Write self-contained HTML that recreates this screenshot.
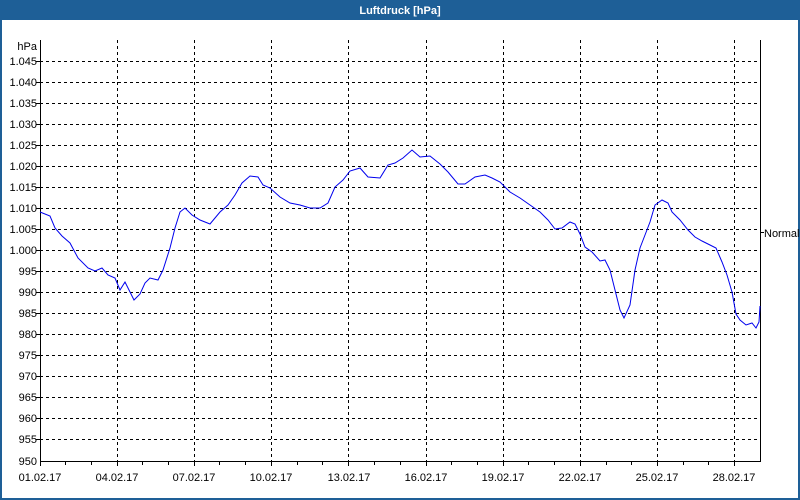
<!DOCTYPE html>
<html><head><meta charset="utf-8"><style>
html,body{margin:0;padding:0;width:800px;height:500px;overflow:hidden;background:#fff}
svg{display:block}
text{font-family:"Liberation Sans",sans-serif;font-size:11px;fill:#000}
</style></head><body>
<svg width="800" height="500" xmlns="http://www.w3.org/2000/svg">
<rect x="0" y="0" width="800" height="500" fill="#1e5f97"/>
<rect x="2" y="20" width="796" height="478" fill="#fff"/>
<text x="400" y="14" text-anchor="middle" style="fill:#fff;font-weight:bold;font-size:11px">Luftdruck [hPa]</text>
<g stroke="#000" stroke-width="1" stroke-dasharray="3,3" fill="none">
<path d="M40 61.5H760M40 82.5H760M40 103.5H760M40 124.5H760M40 145.5H760M40 166.5H760M40 187.5H760M40 208.5H760M40 229.5H760M40 250.5H760M40 271.5H760M40 292.5H760M40 313.5H760M40 334.5H760M40 355.5H760M40 376.5H760M40 397.5H760M40 418.5H760M40 439.5H760"/>
<path d="M117.5 40V461M194.5 40V461M271.5 40V461M348.5 40V461M426.5 40V461M503.5 40V461M580.5 40V461M657.5 40V461M734.5 40V461"/>
</g>
<g stroke="#000" stroke-width="1" fill="none">
<path d="M40.5 40V461.5H760.5V40"/>
<path d="M65.5 461V465M91.5 461V465M117.5 461V466M142.5 461V465M168.5 461V465M194.5 461V466M219.5 461V465M245.5 461V465M271.5 461V466M297.5 461V465M322.5 461V465M348.5 461V466M374.5 461V465M400.5 461V465M426.5 461V466M451.5 461V465M477.5 461V465M503.5 461V466M528.5 461V465M554.5 461V465M580.5 461V466M606.5 461V465M631.5 461V465M657.5 461V466M683.5 461V465M708.5 461V465M734.5 461V466M40.5 461V466"/>
<path d="M760 232.5H764"/>
<path d="M36 61.5H40M36 82.5H40M36 103.5H40M36 124.5H40M36 145.5H40M36 166.5H40M36 187.5H40M36 208.5H40M36 229.5H40M36 250.5H40M36 271.5H40M36 292.5H40M36 313.5H40M36 334.5H40M36 355.5H40M36 376.5H40M36 397.5H40M36 418.5H40M36 439.5H40"/>
</g>
<g text-anchor="end">
<text x="37" y="50">hPa</text>
<text x="37" y="65">1.045</text><text x="37" y="86">1.040</text><text x="37" y="107">1.035</text><text x="37" y="128">1.030</text><text x="37" y="149">1.025</text><text x="37" y="170">1.020</text><text x="37" y="191">1.015</text><text x="37" y="212">1.010</text><text x="37" y="233">1.005</text><text x="37" y="254">1.000</text><text x="37" y="275">995</text><text x="37" y="296">990</text><text x="37" y="317">985</text><text x="37" y="338">980</text><text x="37" y="359">975</text><text x="37" y="380">970</text><text x="37" y="401">965</text><text x="37" y="422">960</text><text x="37" y="443">955</text><text x="37" y="465">950</text>
</g>
<g text-anchor="middle">
<text x="40" y="481">01.02.17</text><text x="117" y="481">04.02.17</text><text x="194" y="481">07.02.17</text><text x="271" y="481">10.02.17</text><text x="349" y="481">13.02.17</text><text x="426" y="481">16.02.17</text><text x="503" y="481">19.02.17</text><text x="580" y="481">22.02.17</text><text x="657" y="481">25.02.17</text><text x="734" y="481">28.02.17</text>
</g>
<text x="764" y="237">Normal</text>
<polyline fill="none" stroke="#0000ee" stroke-width="1" points="40,212 50,216 55,228 62,236 70,243 78,258 88,268 95,271 102,268 108,275 115,278 120,290 125,282 130,292 134,300 140,294 145,283 150,278 158,280 163,270 170,248 175,228 180,212 185,208 192,215 200,220 210,224 220,212 228,205 235,195 242,183 250,176 258,177 263,185 270,188 280,197 290,203 300,205 310,208 320,208 328,203 335,187 343,180 350,171 360,168 368,177 380,178 388,165 395,163 403,158 412,150 420,157 430,156 440,164 448,172 458,184 465,184 475,177 485,175 492,178 500,182 510,192 520,198 530,205 540,212 548,220 555,229 562,228 570,222 575,224 580,234 585,247 592,252 600,261 605,260 610,270 615,290 620,310 624,318 630,305 635,270 640,248 645,235 650,222 655,205 662,200 668,203 672,212 680,220 688,230 695,237 702,241 710,245 716,248 722,262 727,275 732,292 736,314 740,320 746,325 752,323 756,328 759,322 760,306"/>
</svg>
</body></html>
